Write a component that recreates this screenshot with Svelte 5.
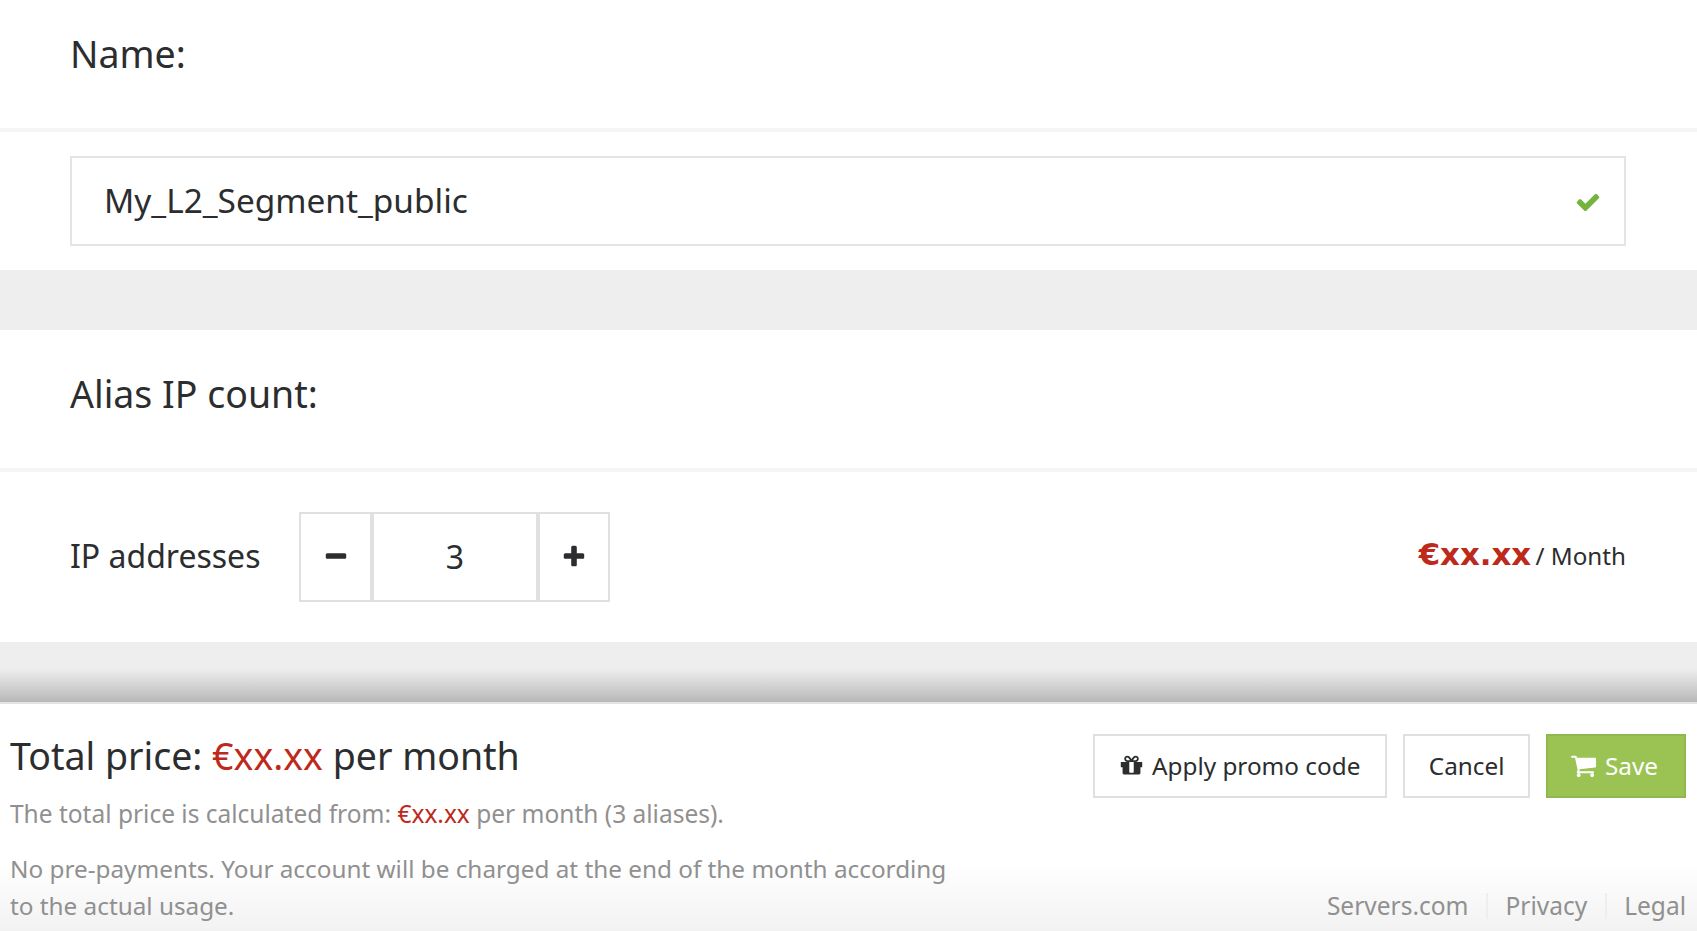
<script>
	let name = $state('My_L2_Segment_public');
	let count = $state(3);
</script>

<div class="page">
	<main class="content">
		<section class="panel">
			<h2 class="panel-title">Name:</h2>
			<div class="panel-body name-body">
				<div class="name-field">
					<input class="name-input" type="text" bind:value={name} />
					<svg class="check" viewBox="0 0 1792 1792" aria-hidden="true">
						<path d="M1671 566q0 40-28 68l-724 724-136 136q-28 28-68 28t-68-28l-136-136-362-362q-28-28-28-68t28-68l136-136q28-28 68-28t68 28l294 295 656-657q28-28 68-28t68 28l136 136q28 28 28 68z" />
					</svg>
				</div>
			</div>
		</section>

		<section class="panel">
			<h2 class="panel-title">Alias IP count:</h2>
			<div class="panel-body count-body">
				<span class="count-label">IP addresses</span>
				<div class="stepper">
					<button class="step" type="button" aria-label="Decrease" onclick={() => count--}>
						<svg viewBox="0 0 1792 1792"><path d="M1600 736v192q0 40-28 68t-68 28h-1216q-40 0-68-28t-28-68v-192q0-40 28-68t68-28h1216q40 0 68 28t28 68z" /></svg>
					</button>
					<div class="step-value">{count}</div>
					<button class="step plus" type="button" aria-label="Increase" onclick={() => count++}>
						<svg viewBox="0 0 1792 1792"><path d="M1600 736v192q0 40-28 68t-68 28h-416v416q0 40-28 68t-68 28h-192q-40 0-68-28t-28-68v-416h-416q-40 0-68-28t-28-68v-192q0-40 28-68t68-28h416v-416q0-40 28-68t68-28h192q40 0 68 28t28 68v416h416q40 0 68 28t28 68z" /></svg>
					</button>
				</div>
				<div class="count-price"><b>€xx.xx</b> / Month</div>
			</div>
		</section>
		<div class="shade"></div>
	</main>

	<footer class="footer">
		<div class="summary">
			<div class="total">Total price: <span class="red">€xx.xx</span> per month</div>
			<p class="calc">The total price is calculated from: <span class="red">€xx.xx</span> per month (3 aliases).</p>
			<p class="note">No pre-payments. Your account will be charged at the end of the month according to the actual usage.</p>
		</div>
		<div class="side">
			<div class="actions">
				<button class="btn promo" type="button">
					<svg class="btn-icon" viewBox="0 0 1792 1792"><path d="M1056 1356v-716h-320v716q0 25 18 38.5t46 13.5h192q28 0 46-13.5t18-38.5zm-456-844h195l-126-161q-26-31-69-31-40 0-68 28t-28 68 28 68 68 28zm688-96q0-40-28-68t-68-28q-43 0-69 31l-125 161h194q40 0 68-28t28-68zm376 256v320q0 14-9 23t-23 9h-96v416q0 40-28 68t-68 28h-1088q-40 0-68-28t-28-68v-416h-96q-14 0-23-9t-9-23v-320q0-14 9-23t23-9h440q-93 0-158.5-65.5t-65.5-158.5 65.5-158.5 158.5-65.5q107 0 168 77l128 165 128-165q61-77 168-77 93 0 158.5 65.5t65.5 158.5-65.5 158.5-158.5 65.5h440q14 0 23 9t9 23z" /></svg>
					Apply promo code
				</button>
				<button class="btn cancel" type="button">Cancel</button>
				<button class="btn save" type="button">
					<svg class="btn-icon" viewBox="0 0 1792 1792"><path d="M704 1536q0 52-38 90t-90 38-90-38-38-90 38-90 90-38 90 38 38 90zm896 0q0 52-38 90t-90 38-90-38-38-90 38-90 90-38 90 38 38 90zm128-1088v512q0 24-16.5 42.5t-40.5 21.5l-1044 122q13 60 13 70 0 16-24 64h920q26 0 45 19t19 45-19 45-45 19h-1024q-26 0-45-19t-19-45q0-11 8-31.5t16-36 21.5-40 15.5-29.5l-177-823h-204q-26 0-45-19t-19-45 19-45 45-19h256q16 0 28.5 6.5t19.5 15.5 13 24.5 8 26 5.5 29.5 4.5 26h1201q26 0 45 19t19 45z" /></svg>
					Save
				</button>
			</div>
			<nav class="links">
				<a href="#servers">Servers.com</a>
				<a href="#privacy">Privacy</a>
				<a href="#legal">Legal</a>
			</nav>
		</div>
	</footer>
</div>

<style>
	:global(body) {
		margin: 0;
		font-family: 'Noto Sans', 'Open Sans', sans-serif;
		color: #2b2d2e;
		background: #fff;
	}

	.page {
		height: 100vh;
		display: flex;
		flex-direction: column;
		overflow: hidden;
	}

	/* the form is scrolled down a little in its pane, hence the -10px */
	.content {
		background: #eee;
		flex: 1;
		display: flex;
		flex-direction: column;
		gap: 60px;
		margin-top: -10px;
	}

	.panel {
		background: #fff;
	}

	.panel-title {
		margin: 0;
		height: 138px;
		box-sizing: border-box;
		padding: 0 70px 12px;
		display: flex;
		align-items: center;
		font-size: 37.5px;
		font-weight: 400;
	}

	.panel-body {
		border-top: 4px solid #f5f5f5;
	}

	.name-body {
		padding: 24px 71px 24px 70px;
	}

	.name-field {
		position: relative;
	}

	.name-input {
		display: block;
		width: 100%;
		height: 90px;
		box-sizing: border-box;
		border: 2px solid #e4e4e4;
		padding: 0 32px 2px;
		font: inherit;
		font-size: 33.4px;
		color: inherit;
		outline: none;
	}

	.check {
		position: absolute;
		right: 25px;
		top: 33px;
		width: 26px;
		height: 26px;
		fill: #73b43c;
	}

	.count-body {
		height: 170px;
		padding: 0 71px 0 70px;
		display: flex;
		align-items: center;
		font-size: 32px;
	}

	.count-label {
		width: 229px;
		margin-bottom: 4px;
	}

	.stepper {
		display: flex;
		height: 90px;
	}

	.step {
		width: 73px;
		padding: 0;
		background: #fff;
		border: 2px solid #e0e0e0;
		display: flex;
		align-items: center;
		justify-content: center;
	}

	.step.plus {
		width: 72px;
	}

	.step svg {
		width: 26px;
		height: 26px;
		fill: #2b2d2e;
	}

	.step-value {
		width: 166px;
		box-sizing: border-box;
		border: 2px solid #e0e0e0;
		padding-bottom: 2px;
		display: flex;
		align-items: center;
		justify-content: center;
	}

	.count-price {
		margin-left: auto;
		margin-bottom: 6px;
		font-size: 24.2px;
	}

	.count-price b {
		font-family: 'DejaVu Sans', sans-serif;
		font-size: 30.8px;
		color: #bd2a1c;
		margin-right: -2px;
	}

	.shade {
		height: 60px;
		flex: none;
		margin-top: -60px;
		background: linear-gradient(to bottom, #eee 45%, #b8b8b8 100%);
	}

	.footer {
		height: 229px;
		flex: none;
		box-sizing: border-box;
		border-top: 2px solid #e2e2e2;
		padding: 27px 11px 12px 10px;
		display: flex;
		justify-content: space-between;
		background: linear-gradient(to bottom, #fff 70%, #f2f2f2 100%);
	}

	.summary {
		width: 960px;
	}

	.total {
		font-size: 37.5px;
		line-height: 50px;
	}

	.red {
		color: #bd2a1c;
	}

	.calc,
	.note {
		margin: 0;
		color: #909090;
		font-size: 24.5px;
		line-height: 37px;
	}

	.calc {
		margin-top: 14px;
	}

	.note {
		margin-top: 18px;
		font-size: 24.3px;
	}

	.side {
		display: flex;
		flex-direction: column;
		justify-content: space-between;
		align-items: flex-end;
	}

	.actions {
		display: flex;
		gap: 16px;
		margin-top: 3px;
	}

	.btn {
		height: 64px;
		box-sizing: border-box;
		padding: 0 24px 2px;
		background: #fff;
		border: 2px solid #e0e0e0;
		font: inherit;
		font-size: 24.3px;
		color: inherit;
		display: flex;
		align-items: center;
		gap: 8px;
	}

	.btn.promo {
		padding-right: 25px;
	}

	.btn.cancel {
		padding: 0 23.5px 2px;
	}

	.btn-icon {
		width: 25px;
		height: 25px;
		fill: currentColor;
	}

	.btn.save {
		padding: 0 26px 2px 22px;
		background: #9ac354;
		border-color: #8fb94c;
		color: #fff;
	}

	.save .btn-icon {
		width: 27px;
		height: 27px;
	}

	.links {
		display: flex;
		font-size: 24.5px;
		line-height: 26px;
	}

	.links a {
		color: #909090;
		text-decoration: none;
		padding: 0 17.5px;
		border-left: 2px solid #eee;
	}

	.links a:first-child {
		border-left: none;
	}

	.links a:last-child {
		padding-right: 0;
	}
</style>
